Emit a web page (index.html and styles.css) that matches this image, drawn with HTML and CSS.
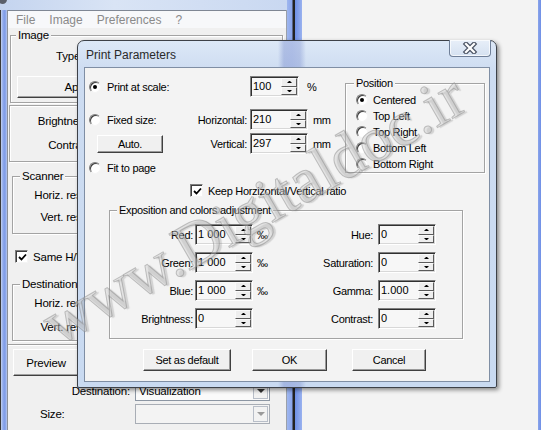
FILE: index.html
```html
<!DOCTYPE html>
<html>
<head>
<meta charset="utf-8">
<title>Print Parameters</title>
<link rel="stylesheet" href="styles.css">
</head>
<body>
<div class="screen">
  <div class="app">
    <div class="app-title"><span class="app-icon"></span></div>
    <div class="app-main">
      <div class="app-frame"></div>
      <div class="app-client">
        <div class="menubar"><span>File</span><span>Image</span><span>Preferences</span><span>?</span></div>
        <div class="grp g-image">
          <div class="legend">Image</div>
          <div class="bg-row row-type"><span class="bg-text">Type:</span></div>
          <div class="bg-btn btn-apply">Apply</div>
        </div>
        <div class="etched p-bc">
          <div class="bg-row row-bright"><span class="bg-lab w83">Brightness:</span></div>
          <div class="bg-row row-contr"><span class="bg-lab w83">Contrast:</span></div>
        </div>
        <div class="grp g-scan">
          <div class="legend">Scanner</div>
          <div class="bg-row row-h"><span class="bg-lab w104">Horiz. resolution:</span></div>
          <div class="bg-row row-v"><span class="bg-lab w104">Vert. resolution:</span></div>
        </div>
        <div class="bg-row row-same"><span class="check on"><svg width="9" height="9" viewBox="0 0 9 9"><path d="M1 4 L3.5 6.5 L8 1.5" fill="none" stroke="#000" stroke-width="1.8"/></svg></span><span class="bg-text same-text">Same H/V resolution</span></div>
        <div class="grp g-dest">
          <div class="legend">Destination</div>
          <div class="bg-row row-h"><span class="bg-lab w104">Horiz. resolution:</span></div>
          <div class="bg-row row-v"><span class="bg-lab w104">Vert. resolution:</span></div>
        </div>
        <div class="sep"></div>
        <div class="bg-btn btn-preview">Preview</div>
        <div class="bg-row row-destsel">
          <span class="bg-lab w122">Destination:</span>
          <div class="combo"><span class="combo-text">Visualization</span><span class="combo-btn"><span class="combo-arrow"></span></span></div>
        </div>
        <div class="bg-row row-size">
          <span class="bg-text size-text">Size:</span>
          <div class="combo disabled"><span class="combo-text"></span><span class="combo-btn"><span class="combo-arrow"></span></span></div>
        </div>
      </div>
    </div>
  </div>
  <div class="divider"></div>
  <div class="rightwin"></div>
  <div class="right-edge"></div>

  <div class="dialog">
    <div class="dlg-titlebar">
      <div class="dlg-title">Print Parameters</div>
      <div class="dlg-close"><svg width="16" height="12" viewBox="0 0 16 12"><path d="M4 2 L12 10 M12 2 L4 10" stroke="#4d5565" stroke-width="4.6" stroke-linecap="square"/><path d="M4 2 L12 10 M12 2 L4 10" stroke="#fff" stroke-width="2.2" stroke-linecap="square"/></svg></div>
    </div>
    <div class="dlg-client">
      <div class="dlg-top">
        <div class="dlg-left">
          <div class="drow r1">
            <div class="dlab"><span class="ropt"><span class="radio on"></span><span>Print at scale:</span></span></div>
            <div class="spin w49"><div class="spin-val">100</div><div class="spin-btns"><span class="sb up"></span><span class="sb dn"></span></div></div>
            <span class="unit u-pct">%</span>
          </div>
          <div class="drow r2">
            <div class="dlab"><span class="ropt"><span class="radio"></span><span>Fixed size:</span></span><span>Horizontal:</span></div>
            <div class="spin w58"><div class="spin-val">210</div><div class="spin-btns"><span class="sb up"></span><span class="sb dn"></span></div></div>
            <span class="unit u-mm">mm</span>
          </div>
          <div class="drow r3">
            <div class="dlab"><span class="btn btn-auto">Auto.</span><span>Vertical:</span></div>
            <div class="spin w58"><div class="spin-val">297</div><div class="spin-btns"><span class="sb up"></span><span class="sb dn"></span></div></div>
            <span class="unit u-mm">mm</span>
          </div>
          <div class="drow r4">
            <span class="ropt"><span class="radio"></span><span>Fit to page</span></span>
          </div>
          <div class="drow r5">
            <span class="check on"><svg width="9" height="9" viewBox="0 0 9 9"><path d="M1 4 L3.5 6.5 L8 1.5" fill="none" stroke="#000" stroke-width="1.8"/></svg></span>
            <span class="chk-text">Keep Horzizontal/Vertical ratio</span>
          </div>
        </div>
        <div class="grp g-pos">
          <div class="legend">Position</div>
          <div class="prow"><span class="radio on"></span><span>Centered</span></div>
          <div class="prow"><span class="radio"></span><span>Top Left</span></div>
          <div class="prow"><span class="radio"></span><span>Top Right</span></div>
          <div class="prow"><span class="radio"></span><span>Bottom Left</span></div>
          <div class="prow"><span class="radio"></span><span>Bottom Right</span></div>
        </div>
      </div>
      <div class="grp g-expo">
        <div class="legend">Exposition and colors adjustment</div>
        <div class="erows">
          <div class="erow">
            <span class="elab1">Red:</span>
            <div class="spin w58 ml2"><div class="spin-val">1 000</div><div class="spin-btns"><span class="sb up"></span><span class="sb dn"></span></div></div>
            <span class="eunit">‰</span>
            <span class="elab2">Hue:</span>
            <div class="spin w58 ml5"><div class="spin-val">0</div><div class="spin-btns"><span class="sb up"></span><span class="sb dn"></span></div></div>
          </div>
          <div class="erow">
            <span class="elab1">Green:</span>
            <div class="spin w58 ml2"><div class="spin-val">1 000</div><div class="spin-btns"><span class="sb up"></span><span class="sb dn"></span></div></div>
            <span class="eunit">‰</span>
            <span class="elab2">Saturation:</span>
            <div class="spin w58 ml5"><div class="spin-val">0</div><div class="spin-btns"><span class="sb up"></span><span class="sb dn"></span></div></div>
          </div>
          <div class="erow">
            <span class="elab1">Blue:</span>
            <div class="spin w58 ml2"><div class="spin-val">1 000</div><div class="spin-btns"><span class="sb up"></span><span class="sb dn"></span></div></div>
            <span class="eunit">‰</span>
            <span class="elab2">Gamma:</span>
            <div class="spin w58 ml5"><div class="spin-val">1.000</div><div class="spin-btns"><span class="sb up"></span><span class="sb dn"></span></div></div>
          </div>
          <div class="erow">
            <span class="elab1">Brightness:</span>
            <div class="spin w58 ml2"><div class="spin-val">0</div><div class="spin-btns"><span class="sb up"></span><span class="sb dn"></span></div></div>
            <span class="eunit"></span>
            <span class="elab2">Contrast:</span>
            <div class="spin w58 ml5"><div class="spin-val">0</div><div class="spin-btns"><span class="sb up"></span><span class="sb dn"></span></div></div>
          </div>
        </div>
      </div>
      <div class="dlg-buttons">
        <span class="btn b-default">Set as default</span>
        <span class="btn b-ok">OK</span>
        <span class="btn b-cancel">Cancel</span>
      </div>
    </div>
  </div>

  <div class="watermark">www.Digitaldoc.ir</div>
</div>
</body>
</html>
```
FILE: styles.css
```css
html, body {
  margin: 0;
  padding: 0;
}
body {
  font-family: "Liberation Sans", Arial, sans-serif;
  font-size: 11px;
  color: #000;
  background: #f2f2f2;
}
.screen {
  position: relative;
  width: 541px;
  height: 430px;
  overflow: hidden;
  display: flex;
  background: #f3f3f3;
}

/* ---------- background application window ---------- */
.app {
  width: 287px;
  flex-shrink: 0;
  display: flex;
  flex-direction: column;
}
.app-title {
  height: 10px;
  background: linear-gradient(to right, #c4d4ef, #d9e4f5 40%, #c9d8f1);
  position: relative;
}
.app-icon {
  position: absolute;
  left: -2px;
  top: -5px;
  width: 9px;
  height: 9px;
  border-radius: 50%;
  background: #5a5f6a;
}
.app-main {
  flex: 1;
  display: flex;
}
.app-frame {
  width: 8px;
  flex-shrink: 0;
  background: linear-gradient(to right, #3a3a3a 0 1px, #c5d3f0 1px, #8fa9ec 3px, #7d9be8 5px, #b8c8ee 7px, #8a8f99 7px 8px);
}
.app-client {
  width: 279px;
  display: flex;
  flex-direction: column;
  background: #f0f0f0;
  border-right: 1px solid #9aa0aa;
  box-sizing: border-box;
  font-size: 11.5px;
  letter-spacing: -0.2px;
}
.menubar {
  height: 18px;
  box-sizing: border-box;
  border-top: 1px solid #7f8794;
  background: #f7f8fa;
  display: flex;
  align-items: center;
  padding-left: 1px;
  color: #8a8a8a;
  font-size: 12px;
  letter-spacing: 0;
}
.menubar span {
  padding: 0 7px;
}

.grp {
  box-sizing: border-box;
  border: 1px solid #a3a3a3;
  box-shadow: inset 1px 1px 0 #fff, 1px 1px 0 #fff;
}
.legend {
  width: max-content;
  margin-top: -7px;
  padding: 0 2px;
  line-height: 13px;
  background: #f0f0f0;
}
.etched {
  box-sizing: border-box;
  border: 1px solid #a3a3a3;
  box-shadow: inset 1px 1px 0 #fff, 1px 1px 0 #fff;
}
.bg-row {
  display: flex;
  align-items: center;
  height: 14px;
}
.bg-lab {
  text-align: right;
  flex-shrink: 0;
}
.w83 { width: 83px; }
.w104 { width: 104px; }
.w122 { width: 122px; }

.g-image {
  margin: 7px 0 0 2px;
  width: 273px;
  height: 68px;
}
.g-image .legend { margin-left: 5px; }
.row-type { margin-top: 7px; padding-left: 45px; }
.bg-btn {
  box-sizing: border-box;
  border: 1px solid;
  border-color: #fff #404040 #404040 #fff;
  box-shadow: inset -1px -1px 0 #a0a0a0;
  background: #f0f0f0;
  display: flex;
  align-items: center;
  justify-content: center;
}
.btn-apply {
  margin: 13px 0 0 6px;
  width: 123px;
  height: 22px;
}
.p-bc {
  margin: 2px 0 0 1px;
  width: 275px;
  height: 57px;
  padding-top: 8px;
}
.row-contr { margin-top: 10px; }

.g-scan, .g-dest {
  margin-left: 4px;
  width: 270px;
  height: 58px;
}
.g-scan { margin-top: 14px; }
.g-dest { margin-top: 21px; height: 57px; }
.g-scan .legend, .g-dest .legend { margin-left: 7px; }
.row-h { margin-top: 5px; }
.row-v { margin-top: 8px; }
.g-dest .row-v { margin-top: 10px; }

.row-same {
  margin: 16px 0 0 7px;
  height: 13px;
}
.same-text { margin-left: 5px; }

.sep {
  margin-top: 3px;
  height: 0;
  border-top: 1px solid #a0a0a0;
  border-bottom: 1px solid #fff;
}
.btn-preview {
  margin: 3px 0 0 5px;
  width: 66px;
  height: 27px;
}
.row-destsel {
  margin-top: 5px;
  height: 20px;
}
.row-size {
  margin-top: 3px;
  height: 20px;
}
.size-text { width: 127px; padding-left: 32px; box-sizing: border-box; }
.combo {
  margin-left: 5px;
  width: 135px;
  height: 20px;
  box-sizing: border-box;
  border: 1px solid #8c96a3;
  background: #fafafa;
  display: flex;
  align-items: center;
}
.row-size .combo { margin-left: 0; }
.combo-text {
  flex: 1;
  padding-left: 3px;
}
.combo-btn {
  width: 15px;
  height: 16px;
  margin-right: 1px;
  box-sizing: border-box;
  border: 1px solid #b8bec8;
  background: #f2f2f2;
  display: flex;
  align-items: center;
  justify-content: center;
}
.combo-arrow {
  width: 0;
  height: 0;
  border-left: 4px solid transparent;
  border-right: 4px solid transparent;
  border-top: 4px solid #333;
}
.combo.disabled {
  background: #f3f3f3;
  border-color: #a8adb5;
}
.combo.disabled .combo-arrow { border-top-color: #9a9a9a; }

.divider {
  width: 15px;
  flex-shrink: 0;
  background: linear-gradient(to right, #9fb7ee, #8aa5ec 5px, #222 6px 8px, #6d8fe6 8px, #9ab2ef 15px);
}
.rightwin {
  flex: 1;
  background: #f3f3f3;
}
.right-edge {
  width: 3px;
  background: linear-gradient(to right, #8aa4ea, #6f8fe6);
}

/* ---------- dialog ---------- */
.dialog {
  position: absolute;
  left: 77px;
  top: 40px;
  width: 420px;
  height: 348px;
  box-sizing: border-box;
  border: 1px solid #3d4148;
  border-radius: 7px 7px 2px 2px;
  background:
    linear-gradient(to right, transparent 200px, rgba(96, 118, 196, 0.35) 206px, rgba(120, 140, 210, 0.45) 214px, rgba(96, 118, 196, 0.3) 222px, transparent 228px),
    linear-gradient(to bottom, #dce8f7, #cddcf1 30px, #c9daf1);
  box-shadow: 2px 2px 4px rgba(0, 0, 0, 0.45);
  display: flex;
  flex-direction: column;
}
.dlg-titlebar {
  height: 26px;
  display: flex;
  justify-content: space-between;
  align-items: flex-start;
}
.dlg-title {
  padding: 7px 0 0 8px;
  line-height: 14px;
  font-size: 12px;
  color: #2a2a2a;
}
.dlg-close {
  margin: -1px 5px 0 0;
  width: 42px;
  height: 17px;
  box-sizing: border-box;
  border: 1px solid #6f7f98;
  border-top: none;
  border-radius: 0 0 4px 4px;
  background: linear-gradient(#e8eff9, #d5e1f1);
  box-shadow: inset 0 0 0 1px rgba(255, 255, 255, 0.7);
  display: flex;
  align-items: center;
  justify-content: center;
}
.dlg-client {
  margin: 0 6px;
  height: 315px;
  box-sizing: border-box;
  border: 1px solid #7f8ea4;
  background: #f3f3f3;
  letter-spacing: -0.3px;
  white-space: nowrap;
}
.dlg-client .legend { background: #f3f3f3; }

.dlg-top {
  display: flex;
  padding: 8px 0 0 4px;
}
.dlg-left {
  width: 256px;
  flex-shrink: 0;
}
.drow {
  display: flex;
  align-items: center;
  height: 21px;
}
.r2 { margin-top: 12px; }
.r3 { margin-top: 3px; }
.r4 { margin-top: 7px; height: 14px; }
.r5 { margin-top: 9px; height: 13px; padding-left: 101px; }
.dlab {
  width: 161px;
  padding-right: 3px;
  box-sizing: border-box;
  display: flex;
  align-items: center;
  justify-content: space-between;
  flex-shrink: 0;
}
.ropt {
  display: flex;
  align-items: center;
}
.radio {
  width: 12px;
  height: 12px;
  box-sizing: border-box;
  border-radius: 50%;
  border: 1px solid;
  border-color: #7e7e7e #f4f4f4 #f4f4f4 #7e7e7e;
  box-shadow: inset 1px 1px 0 #3e3e3e;
  background: #fff;
  display: flex;
  align-items: center;
  justify-content: center;
  flex-shrink: 0;
  margin-right: 6px;
}
.radio.on::after {
  content: "";
  width: 4px;
  height: 4px;
  border-radius: 50%;
  background: #000;
}
.check {
  width: 13px;
  height: 13px;
  box-sizing: border-box;
  border: 1px solid;
  border-color: #7e7e7e #f4f4f4 #f4f4f4 #7e7e7e;
  box-shadow: inset 1px 1px 0 #3e3e3e;
  background: #fff;
  display: flex;
  align-items: center;
  justify-content: center;
  flex-shrink: 0;
}
.check svg { margin: 1px 0 0 1px; }
.chk-text { margin-left: 5px; }

.spin {
  display: flex;
  height: 21px;
  box-sizing: border-box;
  border: 1px solid;
  border-color: #808080 #fff #fff #808080;
  box-shadow: inset 1px 1px 0 #303030, inset -1px -1px 0 #d8d8d8;
  padding: 1px;
  background: #f7f7f7;
  flex-shrink: 0;
  letter-spacing: 0;
}
.w49 { width: 49px; }
.w58 { width: 58px; }
.ml2 { margin-left: 2px; }
.ml5 { margin-left: 5px; }
.spin-val {
  flex: 1;
  padding: 1px 0 0 1px;
  line-height: 14px;
}
.spin-btns {
  width: 16px;
  display: flex;
  flex-direction: column;
}
.sb {
  flex: 1;
  box-sizing: border-box;
  border: 1px solid;
  border-color: #fafafa #5a5a5a #5a5a5a #fafafa;
  background: #eeeeee;
  display: flex;
  align-items: center;
  justify-content: center;
}
.sb::after {
  content: "";
  width: 1px;
  height: 0;
  border-left: 2px solid transparent;
  border-right: 2px solid transparent;
}
.sb.up::after { border-bottom: 2px solid #000; }
.sb.dn::after { border-top: 2px solid #000; }
.unit { flex-shrink: 0; }
.u-pct { margin-left: 8px; }
.u-mm { margin-left: 5px; }

.btn {
  box-sizing: border-box;
  height: 22px;
  border: 1px solid;
  border-color: #fff #404040 #404040 #fff;
  box-shadow: inset -1px -1px 0 #9a9a9a;
  background: #f0f0f0;
  display: flex;
  align-items: center;
  justify-content: center;
  flex-shrink: 0;
}
.btn-auto {
  margin-left: 8px;
  width: 66px;
  height: 18px;
}

.g-pos {
  margin: 7px 0 0 0;
  width: 140px;
  height: 90px;
  flex-shrink: 0;
}
.g-pos .legend { margin-left: 8px; }
.prow {
  display: flex;
  align-items: center;
  height: 16px;
  padding-left: 10px;
}
.prow .radio { margin-right: 5px; }
.g-pos .legend + .prow { margin-top: 2px; }

.g-expo {
  margin: 13px 0 0 24px;
  width: 354px;
  height: 129px;
}
.g-expo .legend { margin-left: 7px; }
.erows {
  margin-top: 7px;
  display: flex;
  flex-direction: column;
  gap: 7px;
}
.erow {
  display: flex;
  align-items: center;
  height: 21px;
}
.elab1 {
  width: 83px;
  text-align: right;
  flex-shrink: 0;
}
.eunit {
  width: 40px;
  padding-left: 4px;
  box-sizing: border-box;
  flex-shrink: 0;
}
.elab2 {
  width: 80px;
  text-align: right;
  flex-shrink: 0;
}

.dlg-buttons {
  margin-top: 10px;
  padding-left: 58px;
  display: flex;
}
.b-default { width: 88px; }
.b-ok { width: 75px; margin-left: 21px; }
.b-cancel { width: 74px; margin-left: 25px; }

/* ---------- watermark ---------- */
.watermark {
  position: absolute;
  left: 60px;
  top: 293px;
  font-family: "Liberation Serif", "Times New Roman", serif;
  font-size: 64px;
  line-height: 64px;
  white-space: nowrap;
  transform-origin: 0 57px;
  transform: rotate(-30deg);
  color: rgba(205, 205, 205, 0.4);
  -webkit-text-stroke: 1px rgba(130, 130, 130, 0.45);
  text-shadow: 2px 2px 1px rgba(110, 110, 110, 0.25);
  pointer-events: none;
}
```
